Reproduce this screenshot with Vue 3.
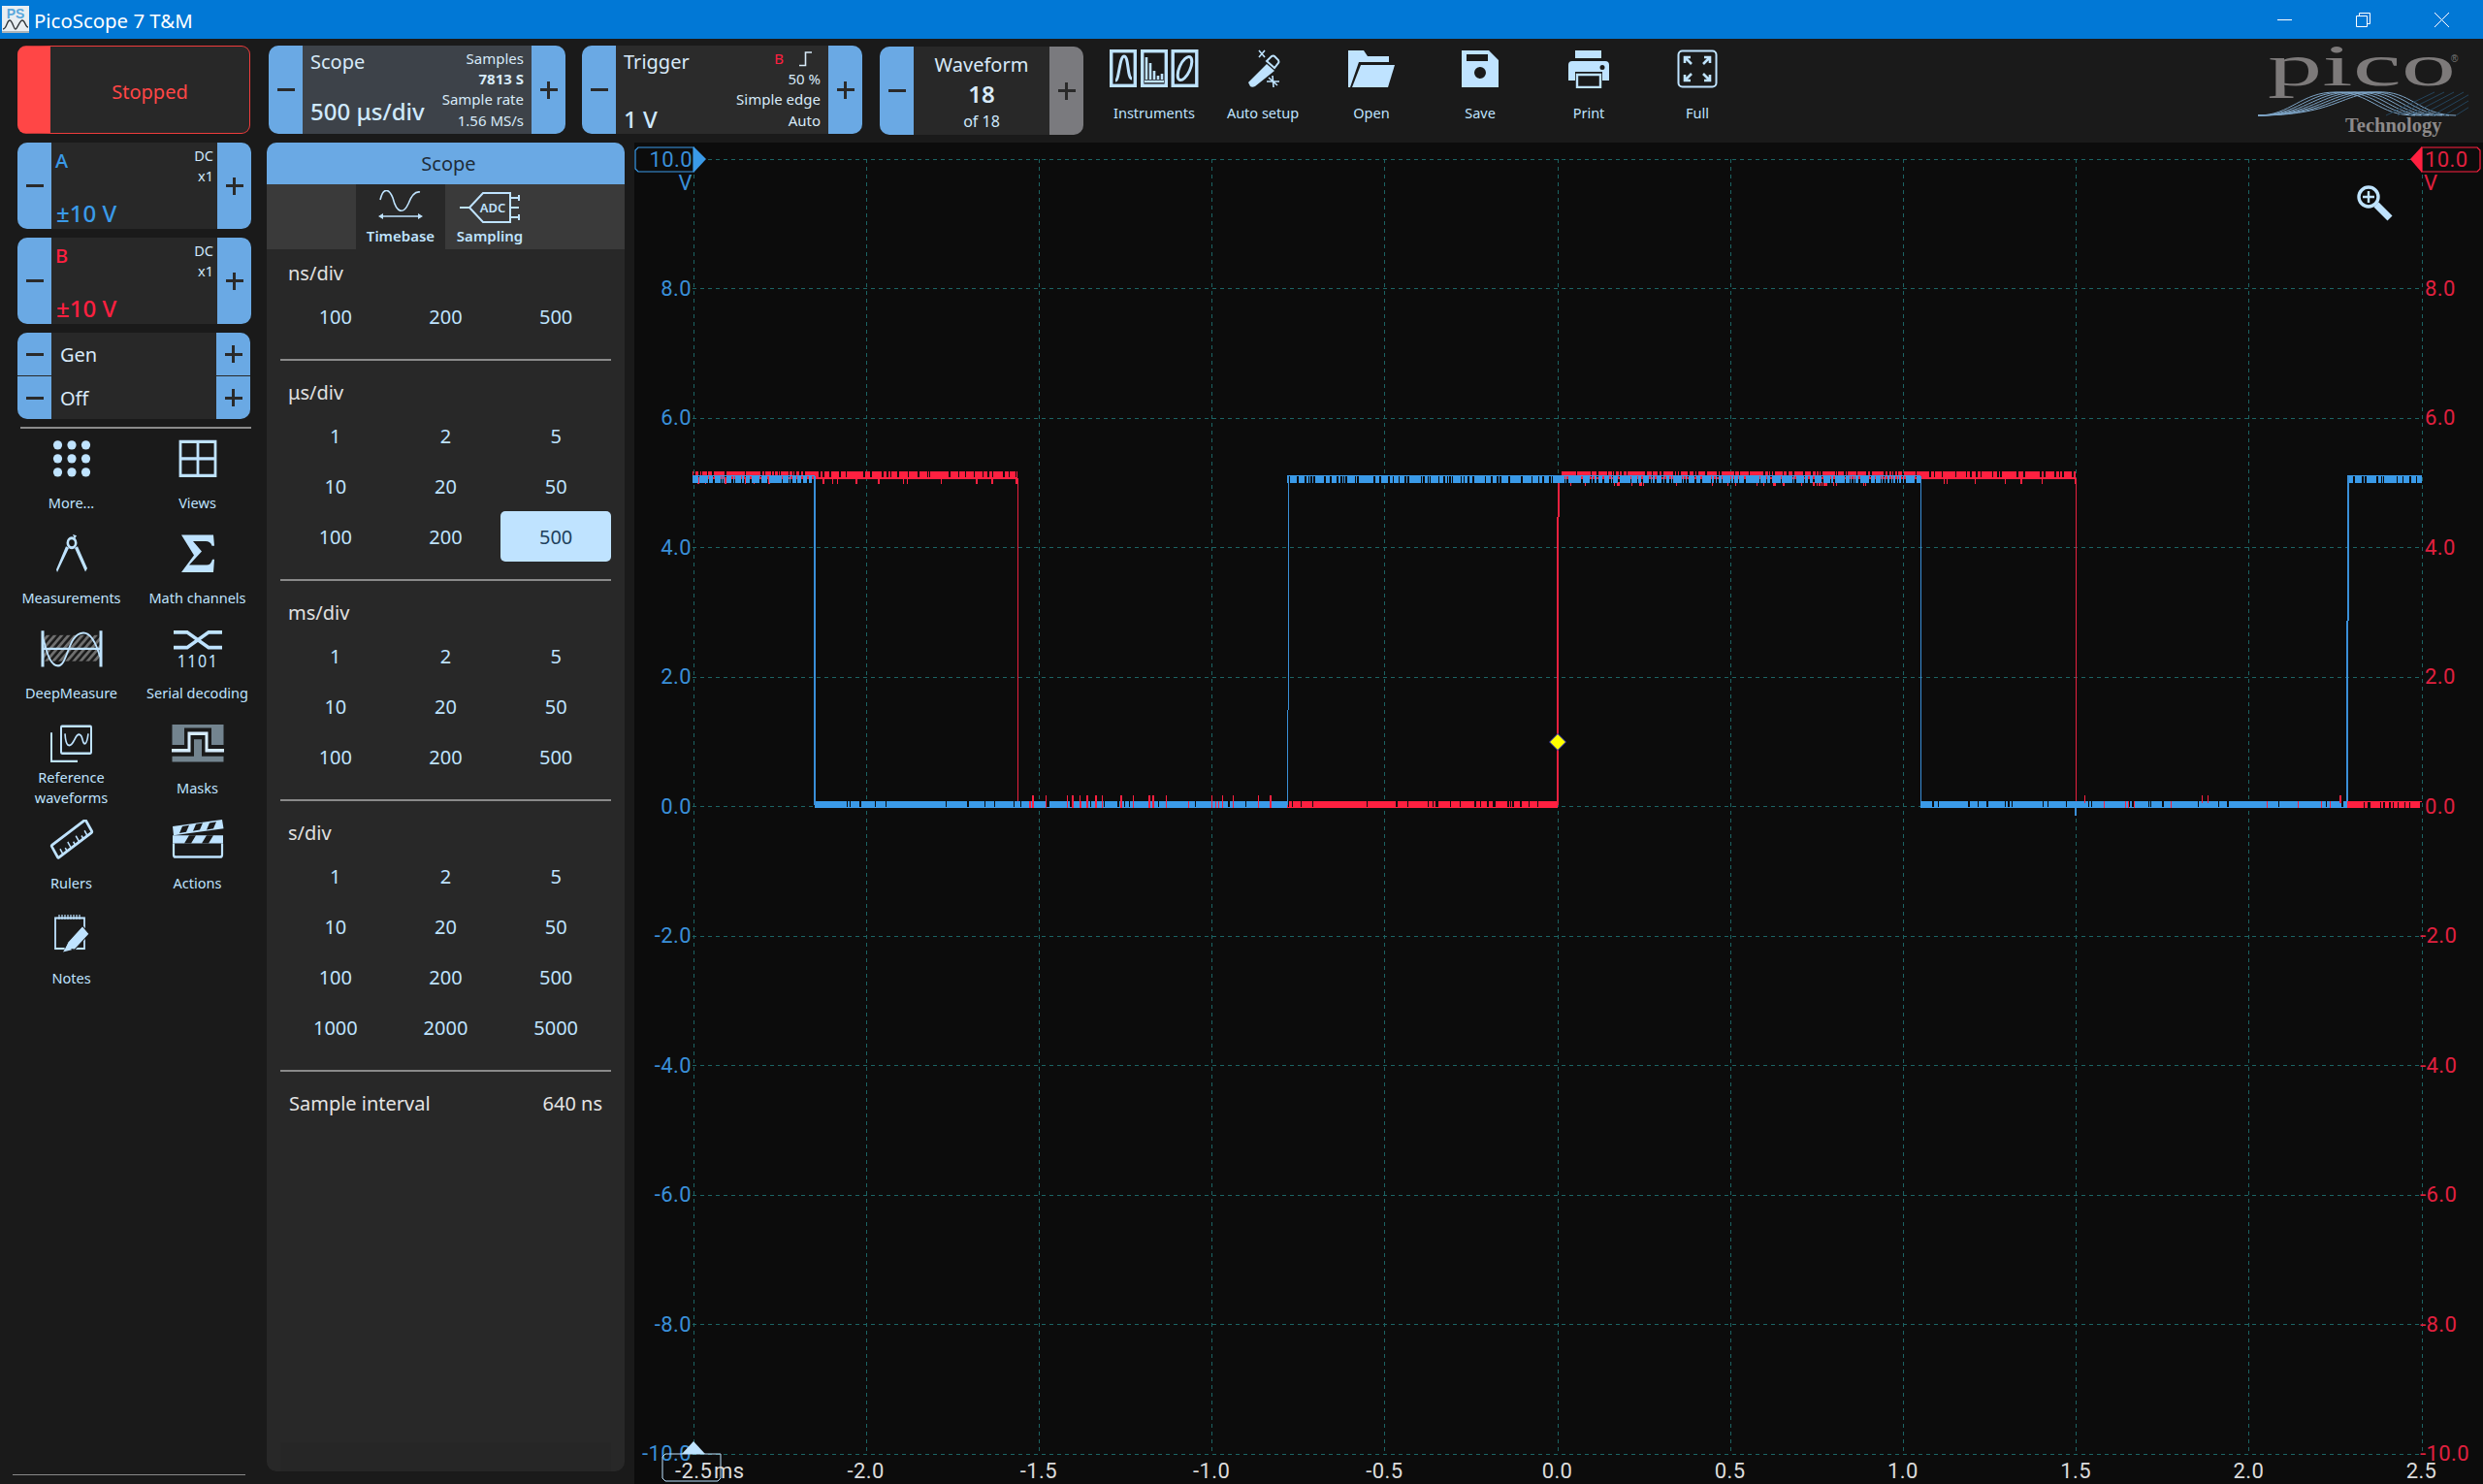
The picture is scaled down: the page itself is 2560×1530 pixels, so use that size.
<script setup>
const timeSections = [
  { label: 'ns/div', rows: [[100, 200, 500]] },
  { label: 'μs/div', rows: [[1, 2, 5], [10, 20, 50], [100, 200, 500]] },
  { label: 'ms/div', rows: [[1, 2, 5], [10, 20, 50], [100, 200, 500]] },
  { label: 's/div', rows: [[1, 2, 5], [10, 20, 50], [100, 200, 500], [1000, 2000, 5000]] }
]

const channels = [
  { name: 'A', cls: 'chan-a' },
  { name: 'B', cls: 'chan-b' }
]

// plot geometry, in page pixels
const xAt = (t) => 1605.5 + t * 356.4
const yAt = (v) => 831.3 - v * 66.73
const voltTicks = [8, 6, 4, 2, 0, -2, -4, -6, -8]
const timeTicks = [-2, -1.5, -1, -0.5, 0, 0.5, 1, 1.5, 2, 2.5]
const gridX = [-2.5, ...timeTicks].map(xAt)
const gridY = [10, ...voltTicks, -10].map(yAt)

// small seeded generator so the noise is the same on every load
let seed = 7813
const rnd = () => {
  seed = (seed + 0x6d2b79f5) | 0
  let t = Math.imul(seed ^ (seed >>> 15), 1 | seed)
  t = (t + Math.imul(t ^ (t >>> 7), 61 | t)) ^ t
  return ((t ^ (t >>> 14)) >>> 0) / 4294967296
}

const box = (x, y, w, h) => `M${x} ${y}h${w}v${h}h-${w}z`

const runs = (x0, x1, y, h, maxOn, maxOff) => {
  let d = ''
  let x = x0
  while (x < x1) {
    const on = Math.min(1 + Math.floor(rnd() * rnd() * maxOn), x1 - x)
    d += box(x, y, on, h)
    x += on + 1 + Math.floor(rnd() * maxOff)
  }
  return d
}

const spikes = (x0, x1, y, h, count) => {
  let d = ''
  for (let i = 0; i < count; i++) {
    const x = Math.floor(x0 + rnd() * (x1 - x0))
    d += box(x, y, rnd() > 0.8 ? 2 : 1, h)
  }
  return d
}

const redPath =
  runs(714, 1049, 486, 6, 20, 2) + box(714, 492, 335, 1.5) + spikes(840, 1049, 493, 6, 12) + spikes(714, 840, 493, 6, 8) +
  runs(1610, 2140, 486, 6, 20, 2) + box(1610, 492, 530, 1.5) + spikes(1610, 1980, 497, 4, 30) + spikes(1980, 2140, 493, 6, 7) +
  box(1327, 826, 279, 7) + box(2140, 830, 280, 3)

const redOver =
  spikes(1049, 1327, 820, 13, 22) + spikes(1049, 1327, 826, 7, 10) + spikes(2140, 2420, 826, 7, 9) + box(2420, 826, 77, 7) + spikes(2140, 2497, 820, 8, 5)

const bluePath =
  runs(714, 840, 490, 7.5, 18, 2) + runs(1327, 1980, 490, 7.5, 16, 2) + runs(2420, 2497, 490, 7.5, 18, 2) +
  box(714, 490, 126, 1) + box(1327, 490, 653, 1) + box(2420, 490, 77, 1) +
  box(840, 826, 487, 7) + box(1980, 826, 440, 7)

const blueGaps = spikes(840, 1327, 826, 6, 26) + spikes(1980, 2420, 826, 6, 24) + spikes(1327, 1606, 826, 6, 28)
const redGaps = spikes(2420, 2497, 827, 6, 12)

const wavePaths = Array.from({ length: 7 }, (_, i) => {
  const s = i * 7
  return `M2328 119 C${2362 + s} 119 ${2372 + s} ${95 + i * 0.4} ${2408 + s} 95 S${2452 + s} 119 ${2490 + s} 119`
})
const waveFade = Array.from({ length: 7 }, (_, i) => `M${2460 + i * 12} 119 L${2510 + i * 10} 95`)
</script>

<template>
  <div class="app">
    <header class="titlebar">
      <svg class="app-icon" viewBox="0 0 28 28">
        <rect width="28" height="28" fill="#e8eef2" />
        <text x="14" y="13" text-anchor="middle" class="ps">PS</text>
        <path d="M1 24 C5 24 5 15 8 15 S12 24 14 24 S18 15 21 15 S24 22 27 22" fill="none" stroke="#33383c" stroke-width="1.4" />
        <path d="M0 27H28" stroke="#9aa0a4" stroke-width="1.5" />
      </svg>
      <span class="app-name">PicoScope 7 T&amp;M</span>
      <div class="win-buttons">
        <svg viewBox="0 0 15 15"><path d="M0 7.5H15" /></svg>
        <svg viewBox="0 0 15 15"><path d="M0.5 3.5H11.5V14.5H0.5ZM3.5 3.5V0.5H14.5V11.5H11.5" /></svg>
        <svg viewBox="0 0 15 15"><path d="M0 0L15 15M15 0L0 15" /></svg>
      </div>
    </header>

    <section class="topbar">
      <div class="run-btn"><span>Stopped</span></div>

      <div class="stepper scope-step">
        <div class="step minus"></div>
        <div class="mid scope-mid">
          <div class="col-left">
            <span class="name">Scope</span>
            <span class="value">500 μs/div</span>
          </div>
          <div class="col-right">
            <span>Samples</span>
            <b>7813 S</b>
            <span>Sample rate</span>
            <span>1.56 MS/s</span>
          </div>
        </div>
        <div class="step plus"></div>
      </div>

      <div class="stepper trigger-step">
        <div class="step minus"></div>
        <div class="mid trigger-mid">
          <div class="col-left">
            <span class="name">Trigger</span>
            <span class="value">1 V</span>
          </div>
          <div class="col-right">
            <span class="trig-src">
              <em>B</em>
              <svg width="14" height="16" viewBox="0 0 14 16"><path d="M0 14.5H6.5V1H13" fill="none" stroke="#d8eaf8" stroke-width="1.6" /></svg>
            </span>
            <span>50 %</span>
            <span>Simple edge</span>
            <span>Auto</span>
          </div>
        </div>
        <div class="step plus"></div>
      </div>

      <div class="stepper wave-step">
        <div class="step minus"></div>
        <div class="mid wave-mid">
          <span class="name">Waveform</span>
          <b>18</b>
          <span class="of">of 18</span>
        </div>
        <div class="step plus off"></div>
      </div>

      <div class="tools">
        <div class="tool">
          <svg width="92" height="40" viewBox="0 0 92 40">
            <g fill="none" stroke="#bfe3ff" stroke-width="3.4">
              <rect x="1.7" y="1.7" width="24.6" height="35.6" />
              <rect x="33.7" y="1.7" width="24.6" height="35.6" />
              <rect x="65.2" y="1.7" width="24.6" height="35.6" />
              <path d="M6 32 C10 32 10 7 15 7 S18 30 23 30" stroke-width="3" />
              <path d="M38 31V8M42 31V14M46 31V22M50 31V27M54 31V25M36 33H56" stroke-width="2.6" />
              <ellipse cx="77.5" cy="19.5" rx="5.5" ry="13" transform="rotate(24 77.5 19.5)" stroke-width="3" />
            </g>
          </svg>
          <span>Instruments</span>
        </div>
        <div class="tool">
          <svg width="50" height="40" viewBox="0 0 50 40">
            <path d="M10 34 L29 15 L37 22 L17 38 Q14 39.5 12 38 Z" fill="#bfe3ff" />
            <path d="M29 12 L34 7 Q36 6 37 7 L41 11 Q42 13 41 14 L37 19 Z" fill="#1a1a1a" stroke="#bfe3ff" stroke-width="2" />
            <path d="M21 1 L27 8 M27 1 L21 8 M35 27 L36 39 M29 33 L42 33 M31 29 L40 37" stroke="#bfe3ff" stroke-width="1.6" fill="none" />
          </svg>
          <span>Auto setup</span>
        </div>
        <div class="tool">
          <svg width="50" height="40" viewBox="0 0 50 40">
            <path d="M1 1H17L21 7H43V13H12L3 39H1Z" fill="#bfe3ff" />
            <path d="M14 16H49L42 39H5Z" fill="#bfe3ff" />
          </svg>
          <span>Open</span>
        </div>
        <div class="tool">
          <svg width="40" height="40" viewBox="0 0 40 40">
            <path fill-rule="evenodd" d="M1 1H29L39 11V39H1ZM6 5V12H28V5ZM20 18A6 6 0 1 0 20 30A6 6 0 1 0 20 18Z" fill="#bfe3ff" />
          </svg>
          <span>Save</span>
        </div>
        <div class="tool">
          <svg width="44" height="40" viewBox="0 0 44 40">
            <rect x="8" y="1" width="27" height="8" fill="#bfe3ff" />
            <path fill-rule="evenodd" d="M5 12H39Q43 12 43 16V32H36V23H8V32H1V16Q1 12 5 12ZM36 16A2.5 2.5 0 1 0 36 21A2.5 2.5 0 1 0 36 16Z" fill="#bfe3ff" />
            <path d="M10 26H34V39H10Z" fill="none" stroke="#bfe3ff" stroke-width="2.4" />
          </svg>
          <span>Print</span>
        </div>
        <div class="tool">
          <svg width="42" height="40" viewBox="0 0 42 40">
            <rect x="1.5" y="1.5" width="39" height="37" rx="4" fill="none" stroke="#bfe3ff" stroke-width="2" />
            <path d="M8 14V8H14M9 9L15 15M34 14V8H28M33 9L27 15M8 26V32H14M9 31L15 25M34 26V32H28M33 31L27 25" fill="none" stroke="#bfe3ff" stroke-width="2.6" />
          </svg>
          <span>Full</span>
        </div>
      </div>

      <svg class="logo" viewBox="2305 40 240 107">
        <text x="2338" y="88" textLength="194" lengthAdjust="spacingAndGlyphs" class="logo-word">pico</text>
        <text x="2527" y="64" class="logo-r">®</text>
        <g fill="none" stroke-width="1">
          <path v-for="(d, i) in wavePaths" :key="i" :d="d" stroke="#7fa6c8" />
          <path v-for="(d, i) in waveFade" :key="'f' + i" :d="d" stroke="#24445c" />
        </g>
        <text x="2418" y="136" class="logo-sub">Technology</text>
      </svg>
    </section>

    <main class="body">
      <aside class="sidebar">
        <div v-for="c in channels" :key="c.name" class="stepper chan-step" :class="c.cls">
          <div class="step minus"></div>
          <div class="mid chan-mid">
            <div class="chan-top">
              <b>{{ c.name }}</b>
              <div class="chan-mode"><span>DC</span><span>x1</span></div>
            </div>
            <span class="chan-range">±10 V</span>
          </div>
          <div class="step plus"></div>
        </div>

        <div class="gen">
          <div class="gen-row">
            <div class="step minus"></div>
            <span>Gen</span>
            <div class="step plus"></div>
          </div>
          <div class="gen-row">
            <div class="step minus"></div>
            <span>Off</span>
            <div class="step plus"></div>
          </div>
        </div>

        <div class="rule"></div>

        <div class="side-tools">
          <div class="side-tool">
            <svg viewBox="-35 0 70 36" preserveAspectRatio="none">
              <g fill="#bfe3ff">
                <ellipse cx="-14.5" cy="5" rx="4.6" ry="4" /><ellipse cx="0" cy="5" rx="4.6" ry="4" /><ellipse cx="14.5" cy="5" rx="4.6" ry="4" />
                <ellipse cx="-14.5" cy="17" rx="4.6" ry="4" /><ellipse cx="0" cy="17" rx="4.6" ry="4" /><ellipse cx="14.5" cy="17" rx="4.6" ry="4" />
                <ellipse cx="-14.5" cy="29" rx="4.6" ry="4" /><ellipse cx="0" cy="29" rx="4.6" ry="4" /><ellipse cx="14.5" cy="29" rx="4.6" ry="4" />
              </g>
            </svg>
            <span>More...</span>
          </div>
          <div class="side-tool">
            <svg viewBox="-35 0 70 36" preserveAspectRatio="none">
              <path d="M-18 2V32H18V2ZM0 2V32M-18 17H18" fill="none" stroke="#bfe3ff" stroke-width="2.8" />
            </svg>
            <span>Views</span>
          </div>
          <div class="side-tool">
            <svg viewBox="-35 0 70 36" preserveAspectRatio="none">
              <circle cx="0" cy="7.5" r="4.2" fill="none" stroke="#bfe3ff" stroke-width="2.6" />
              <path d="M1 0L5 1L3 4ZM-3 12L-6 10.5L-16 31L-15 33.5ZM3 12L6 10.5L16 30L14 33Z" fill="#bfe3ff" />
            </svg>
            <span>Measurements</span>
          </div>
          <div class="side-tool">
            <svg viewBox="-35 0 70 36" preserveAspectRatio="none">
              <path d="M-17 0.5H16L17 10H14.5Q13 6 8 6H-5L4 15L-9 27H9Q13.5 27 15 22H17L16 33.5H-17L-4 18.5Z" fill="#bfe3ff" />
            </svg>
            <span>Math channels</span>
          </div>
          <div class="side-tool">
            <svg viewBox="-35 0 70 36" preserveAspectRatio="none">
              <defs>
                <pattern id="hatch" width="5" height="5" patternUnits="userSpaceOnUse" patternTransform="rotate(45)">
                  <rect width="2.6" height="5" fill="#6f6f6f" />
                </pattern>
              </defs>
              <rect x="-29" y="5" width="58" height="23" fill="url(#hatch)" />
              <path d="M-30 1V33M30 1V33" stroke="#bfe3ff" stroke-width="3" />
              <path d="M-29 17H29" stroke="#bfe3ff" stroke-width="1.8" />
              <path d="M-29 9 C-25 24 -21 32 -14 32 C-4 32 -4 3 12 3 C20 3 25 12 29 24" fill="none" stroke="#bfe3ff" stroke-width="1.8" />
            </svg>
            <span>DeepMeasure</span>
          </div>
          <div class="side-tool">
            <svg viewBox="-35 0 70 36" preserveAspectRatio="none">
              <path d="M-25 2.5H-11L11 16H25M-25 16H-11L11 2.5H25" fill="none" stroke="#bfe3ff" stroke-width="3.2" />
              <text x="0" y="33.5" text-anchor="middle" class="bits">1101</text>
            </svg>
            <span>Serial decoding</span>
          </div>
          <div class="side-tool">
            <svg viewBox="-35 0 70 36" preserveAspectRatio="none">
              <rect x="-11" y="1.5" width="31" height="24" rx="1" fill="none" stroke="#bfe3ff" stroke-width="2" />
              <path d="M-21 7V32.5H6" fill="none" stroke="#bfe3ff" stroke-width="2" />
              <path d="M-7 8 C-6 22 -1 20 3 13 S10 9 11 13 S15 21 17 8" fill="none" stroke="#bfe3ff" stroke-width="1.6" />
            </svg>
            <span>Reference waveforms</span>
          </div>
          <div class="side-tool">
            <svg viewBox="-35 0 70 36" preserveAspectRatio="none">
              <rect x="-26.5" y="0" width="53" height="33" fill="#73848f" />
              <path d="M-27 23H-9V8H9V23H27" fill="none" stroke="#1a1a1a" stroke-width="10" />
              <path d="M-27 23H-9V8H9V23H27" fill="none" stroke="#d6ecfc" stroke-width="3" />
            </svg>
            <span>Masks</span>
          </div>
          <div class="side-tool">
            <svg viewBox="-35 0 70 36" preserveAspectRatio="none">
              <g transform="translate(0 17) rotate(-33)">
                <rect x="-21" y="-6.5" width="42" height="13" rx="1" fill="none" stroke="#bfe3ff" stroke-width="2.6" />
                <path d="M-15 6V1M-10 6V3M-5 6V0M0 6V3M5 6V0M10 6V3M15 6V1" stroke="#bfe3ff" stroke-width="1.5" />
              </g>
            </svg>
            <span>Rulers</span>
          </div>
          <div class="side-tool">
            <svg viewBox="-35 0 70 36" preserveAspectRatio="none">
              <path d="M-26 6L25 0L26.5 8L-25 14Z" fill="#bfe3ff" />
              <path d="M-26 14H26V21H-26Z" fill="#bfe3ff" />
              <path d="M-16 6L-9 5L-12 11L-19 12ZM-2 4L5 3L2 9L-5 10ZM12 3L19 2L16 8L9 9ZM-14 21L-9 14H-2L-7 21ZM4 21L9 14H16L11 21Z" fill="#1a1a1a" />
              <path d="M-25 21V31Q-25 33 -23 33H23Q25 33 25 31V21" fill="none" stroke="#bfe3ff" stroke-width="2.2" />
            </svg>
            <span>Actions</span>
          </div>
          <div class="side-tool">
            <svg viewBox="-35 0 70 36" preserveAspectRatio="none">
              <rect x="-17" y="3" width="30" height="27" fill="none" stroke="#bfe3ff" stroke-width="1.8" />
              <path d="M-13 0V4M-10 0V4M-7 0V4M-4 0V4M-1 0V4M2 0V4M5 0V4M8 0V4" stroke="#bfe3ff" stroke-width="1.2" />
              <path d="M-7 30 L-4 24 L11 10 L18 17 L3 31 Z" fill="#bfe3ff" stroke="#1a1a1a" stroke-width="1" />
              <path d="M-9 33L-4 26L0 31Z" fill="#bfe3ff" />
            </svg>
            <span>Notes</span>
          </div>
        </div>

        <div class="rule bottom-rule"></div>
      </aside>

      <section class="panel">
        <div class="panel-head">Scope</div>
        <div class="tabs">
          <div class="tab active">
            <svg width="46" height="36" viewBox="0 0 46 36">
              <path d="M2 10 C5 -3 11 -2 15 8 C19 24 26 25 31 14 C34 6 38 1 43 2" fill="none" stroke="#bfe3ff" stroke-width="1.6" />
              <path d="M3 27H43" stroke="#bfe3ff" stroke-width="1.6" />
              <path d="M0 27L5 24V30ZM46 27L41 24V30Z" fill="#bfe3ff" />
            </svg>
            <span>Timebase</span>
          </div>
          <div class="tab">
            <svg width="66" height="36" viewBox="0 0 66 36">
              <path d="M2 18H12M12 18L26 3H54V33H26ZM54 8H63M54 18H63M54 28H63M63 5V11M63 25V31" fill="none" stroke="#bfe3ff" stroke-width="2" />
              <text x="36" y="23" text-anchor="middle" class="adc">ADC</text>
            </svg>
            <span>Sampling</span>
          </div>
        </div>

        <div v-for="section in timeSections" :key="section.label" class="time-section">
          <div class="time-label">{{ section.label }}</div>
          <div class="time-grid">
            <template v-for="row in section.rows">
              <div
                v-for="val in row"
                :key="val"
                class="time-cell"
                :class="{ selected: section.label === 'μs/div' && val === 500 }"
              >{{ val }}</div>
            </template>
          </div>
          <div class="time-rule"></div>
        </div>

        <div class="interval"><span>Sample interval</span><span>640 ns</span></div>
        <div class="panel-foot"></div>
      </section>

      <div class="plot">
        <svg class="plot-svg" width="1906" height="1383" viewBox="654 147 1906 1383" font-family="Roboto, sans-serif">
          <g class="grid" shape-rendering="crispEdges">
            <path v-for="x in gridX" :key="x" :d="`M${Math.round(x)} 164V1499`" />
            <path v-for="y in gridY" :key="y" :d="`M714 ${Math.round(y)}H2497`" />
          </g>

          <g shape-rendering="crispEdges">
            <path :d="redPath" fill="#ff2040" />
            <path d="M1049.5 493V830M2140.5 493V833M1606 830V533M1607 533V493" stroke="#e8213f" stroke-width="1.4" fill="none" />
            <path :d="bluePath" fill="#3a9ae8" />
            <path d="M840 491V830M1327.5 830V732M1328.5 732V491M1980.5 491V826M2420 826V640M2421 640V491M2140 833V841" stroke="#3a8fd8" stroke-width="1.4" fill="none" />
            <path :d="blueGaps" fill="#0c0c0c" />
            <path :d="redOver" fill="#ff2040" />
            <path :d="redGaps" fill="#0c0c0c" />
          </g>

          <path d="M1606 756.5L1614.5 765L1606 773.5L1597.5 765Z" fill="#ffff00" stroke="#2020c0" stroke-width="1" />

          <g class="volt-left">
            <text v-for="v in voltTicks" :key="v" x="713" :y="yAt(v)">{{ v.toFixed(1) }}</text>
            <text x="713" :y="yAt(-10)">-10.0</text>
          </g>
          <g class="volt-right">
            <text v-for="v in voltTicks" :key="v" :x="v < 0 ? 2495 : 2500" :y="yAt(v)">{{ v.toFixed(1) }}</text>
            <text x="2495" :y="yAt(-10)">-10.0</text>
          </g>

          <path d="M658 152H715V177H658L655 174V155Z" fill="#0c0c0c" stroke="#3a9ae8" stroke-width="1.2" />
          <text x="714" y="164" class="tag blue">10.0</text>
          <path d="M715 151L728 164L715 178Z" fill="#3a9ae8" />
          <text x="714" y="188" class="tag-unit blue">V</text>

          <path d="M2554 152H2497V177H2554L2557 174V155Z" fill="#0c0c0c" stroke="#ff2040" stroke-width="1.2" />
          <text x="2500" y="164" class="tag red">10.0</text>
          <path d="M2497 151L2485 164L2497 178Z" fill="#ff2040" />
          <text x="2499" y="188" class="tag-unit red">V</text>

          <g class="time-labels">
            <text v-for="t in timeTicks" :key="t" :x="xAt(t)" y="1516">{{ t.toFixed(1) }}</text>
          </g>
          <path d="M715 1486L703 1499H727Z" fill="#bfe3ff" />
          <path d="M686 1499H743V1524L740 1527H686L683 1524V1502Z" fill="none" stroke="#bfe3ff" stroke-width="1" />
          <text x="696" y="1516" class="t-first">-2.5</text>
          <text x="736" y="1516" class="t-first">ms</text>

          <g fill="none" stroke="#bfe3ff">
            <circle cx="2442" cy="203" r="10" stroke-width="3.4" />
            <path d="M2450 211L2464 225" stroke-width="7" />
            <path d="M2442 197V209M2436 203H2448" stroke-width="2.4" />
          </g>
        </svg>
      </div>
    </main>
  </div>
</template>

<style>
html, body {
  margin: 0;
  background: #1a1a1a;
}
</style>

<style scoped>
.app {
  width: 2560px;
  height: 1530px;
  display: flex;
  flex-direction: column;
  overflow: hidden;
  background: #1a1a1a;
  font-family: "Noto Sans", "Open Sans", sans-serif;
  font-size: 15px;
  color: #d8eaf8;
}

.titlebar {
  height: 40px;
  flex: none;
  display: flex;
  align-items: center;
  background: #0178d6;
  color: #fff;
}
.app-icon {
  width: 28px;
  height: 28px;
  margin-left: 2px;
}
.ps {
  font: 700 14px "Liberation Sans", sans-serif;
  fill: #5aa7dc;
}
.app-name {
  margin-left: 5px;
  margin-top: 2px;
  font-size: 20.4px;
}
.win-buttons {
  margin-left: auto;
  display: flex;
  gap: 66px;
  margin-right: 35px;
}
.win-buttons svg {
  width: 15px;
  height: 15px;
  fill: none;
  stroke: #fff;
  stroke-width: 1;
}

.topbar {
  height: 107px;
  flex: none;
  display: flex;
  padding-top: 7px;
  box-sizing: border-box;
}
.run-btn {
  width: 240px;
  height: 91px;
  margin-left: 18px;
  box-sizing: border-box;
  border: 1.5px solid #ee3c3c;
  border-left: 34px solid #ff4646;
  border-radius: 9px;
  background: #282828;
  color: #ff4646;
  font-size: 20px;
  display: flex;
  align-items: center;
  justify-content: center;
}
.run-btn span {
  margin-top: 4px;
}

.stepper {
  display: flex;
  border-radius: 10px;
  overflow: hidden;
  background: #282828;
}
.step {
  position: relative;
  width: 35px;
  flex: none;
  background: #6aa9e4;
}
.step::before,
.step.plus::after {
  content: "";
  position: absolute;
  left: 50%;
  top: 50%;
  background: #2a2a2a;
}
.step::before {
  width: 18px;
  height: 3px;
  margin: -1.5px 0 0 -9px;
}
.step.plus::after {
  width: 3px;
  height: 18px;
  margin: -9px 0 0 -1.5px;
}
.step.off {
  background: #7a7a7e;
}
.mid {
  flex: 1;
  min-width: 0;
}

.scope-step {
  width: 306px;
  height: 91px;
  margin-left: 19px;
}
.trigger-step {
  width: 289px;
  height: 91px;
  margin-left: 17px;
}
.wave-step {
  width: 210px;
  height: 91px;
  margin-left: 18px;
  margin-top: 1px;
}
.scope-mid {
  background: #3d4249;
}
.scope-mid,
.trigger-mid {
  display: flex;
  justify-content: space-between;
  padding: 3px 8px 6px 8px;
  box-sizing: border-box;
}
.trigger-mid {
  background: #2b2b2b;
  padding-bottom: 0;
}
.trigger-mid .value {
  margin-bottom: -2px;
}
.col-left {
  display: flex;
  flex-direction: column;
  justify-content: space-between;
}
.col-left .name {
  font-size: 20px;
  line-height: 28px;
}
.col-left .value {
  font-size: 24px;
  font-weight: 500;
  line-height: 34px;
  color: #cfe9fd;
}
.col-right {
  display: flex;
  flex-direction: column;
  align-items: flex-end;
  font-size: 15px;
  line-height: 21.2px;
}
.trig-src {
  display: flex;
  align-items: center;
  gap: 16px;
  padding-right: 8px;
  height: 21.2px;
}
.trig-src em {
  font-style: normal;
  color: #ff2040;
}
.wave-mid {
  display: flex;
  flex-direction: column;
  align-items: center;
  padding-top: 5px;
  box-sizing: border-box;
}
.wave-mid .name {
  font-size: 20px;
  line-height: 28px;
}
.wave-mid b {
  font-size: 24px;
  line-height: 31px;
  font-weight: 600;
}
.wave-mid .of {
  font-size: 16px;
  line-height: 26px;
  color: #cfe9fd;
}

.tools {
  display: flex;
  margin-left: 17px;
}
.tool {
  width: 112px;
  display: flex;
  flex-direction: column;
  align-items: center;
  padding-top: 4px;
  color: #bfe3ff;
}
.tool svg {
  height: 40px;
  flex: none;
}
.tool span {
  margin-top: 15px;
  font-size: 14.5px;
  line-height: 20px;
}

.logo {
  margin-left: auto;
  margin-right: 15px;
  margin-top: -7px;
  width: 240px;
  height: 107px;
}
.logo-word {
  font: 400 62px "Liberation Serif", serif;
  fill: #7d7a7a;
}
.logo-r {
  font: 400 10px "Liberation Sans", sans-serif;
  fill: #7d7a7a;
}
.logo-sub {
  font: 700 20.5px "Liberation Serif", serif;
  fill: #8d8a8a;
}

.body {
  flex: 1;
  display: flex;
  min-height: 0;
}

.sidebar {
  width: 275px;
  flex: none;
  padding-left: 18px;
  box-sizing: border-box;
  display: flex;
  flex-direction: column;
}
.chan-step {
  width: 241px;
  height: 89px;
  margin-bottom: 9px;
}
.chan-mid {
  display: flex;
  flex-direction: column;
  justify-content: space-between;
  padding: 3px 4px 0 4px;
  box-sizing: border-box;
}
.chan-top {
  display: flex;
  justify-content: space-between;
}
.chan-top b {
  font-size: 20px;
  font-weight: 500;
  line-height: 32px;
}
.chan-mode {
  display: flex;
  flex-direction: column;
  align-items: flex-end;
  line-height: 21px;
  font-size: 14.5px;
  color: #cfe9fd;
}
.chan-range {
  font-size: 24px;
  font-weight: 500;
  line-height: 34px;
  padding-left: 1px;
  margin-bottom: -1px;
}
.chan-a b,
.chan-a .chan-range {
  color: #3a9ae8;
}
.chan-b b,
.chan-b .chan-range {
  color: #ff2040;
}

.gen {
  width: 240px;
  border-radius: 10px;
  overflow: hidden;
  background: #282828;
}
.gen-row {
  height: 44px;
  display: flex;
  align-items: center;
  font-size: 20px;
}
.gen-row + .gen-row {
  margin-top: 1px;
}
.gen-row .step {
  height: 100%;
}
.gen-row span {
  flex: 1;
  padding-left: 9px;
  margin-top: 1px;
}
.rule {
  width: 238px;
  height: 2px;
  margin: 8px 0 0 3px;
  background: #8a8a8a;
  flex: none;
}
.side-tools {
  display: grid;
  grid-template-columns: 130px 130px;
  grid-auto-rows: 98px;
  margin: 11px 0 0 -9.5px;
}
.side-tool {
  display: flex;
  flex-direction: column;
  align-items: center;
  color: #bfe3ff;
  text-align: center;
}
.side-tool svg {
  width: 70px;
  height: 42px;
  flex: none;
}
.side-tool span {
  height: 46px;
  display: flex;
  align-items: center;
  justify-content: center;
  font-size: 14.5px;
  line-height: 21px;
  width: 130px;
}
.bottom-rule {
  margin: auto 0 9px -5px;
  width: 240px;
  height: 1px;
}

.panel {
  width: 369px;
  flex: none;
  height: 1370px;
  background: #282828;
  border-radius: 10px;
  overflow: hidden;
  display: flex;
  flex-direction: column;
}
.panel-head {
  height: 43px;
  flex: none;
  padding-left: 6px;
  box-sizing: border-box;
  background: #6aa9e4;
  color: #1e2c3a;
  font-size: 20px;
  line-height: 44px;
  text-align: center;
}
.tabs {
  height: 67px;
  flex: none;
  display: flex;
  padding-left: 92px;
  background: #3a3a3a;
}
.tab {
  width: 92px;
  display: flex;
  flex-direction: column;
  align-items: center;
  padding-top: 6px;
  box-sizing: border-box;
  font-size: 15px;
  font-weight: 600;
  color: #bfe3ff;
}
.tab svg {
  flex: none;
}
.tab span {
  line-height: 22px;
}
.tab.active {
  background: #282828;
}
.adc {
  font: 600 13px "Noto Sans", sans-serif;
  fill: #bfe3ff;
}
.bits {
  font: 400 16px "Noto Sans", sans-serif;
  letter-spacing: 1.5px;
  fill: #bfe3ff;
}

.time-section {
  padding-top: 14px;
  flex: none;
}
.tabs + .time-section {
  padding-top: 6px;
}
.time-label {
  height: 34px;
  box-sizing: border-box;
  padding: 2px 0 0 22px;
  line-height: 34px;
  margin-bottom: 3px;
  font-size: 20px;
  color: #e0e0e0;
}
.time-grid {
  display: grid;
  grid-template-columns: repeat(3, 1fr);
  grid-auto-rows: 52px;
  margin: 0 14px;
}
.time-cell {
  display: flex;
  align-items: center;
  justify-content: center;
  font-size: 20px;
  color: #bfe3ff;
}
.time-cell.selected {
  background: #bfe3ff;
  color: #20405c;
  border-radius: 5px;
}
.time-rule {
  height: 2px;
  margin: 18px 14px 0;
  background: #8a8a8a;
}
.interval {
  height: 64px;
  flex: none;
  display: flex;
  align-items: center;
  justify-content: space-between;
  padding: 0 23px;
  font-size: 20px;
  color: #e4e4e4;
}
.panel-foot {
  height: 30px;
  margin: auto 14px 0;
  background: #262626;
  flex: none;
}

.plot {
  flex: 1;
  margin-left: 10px;
  background: #0c0c0c;
  position: relative;
  min-width: 0;
}
.plot-svg {
  display: block;
}
.grid path {
  fill: none;
  stroke: #1c6464;
  stroke-width: 1;
  stroke-dasharray: 4 4;
}
.volt-left text,
.volt-right text,
.tag,
.tag-unit,
.time-labels text,
.t-first {
  font-size: 22px;
  letter-spacing: 0.4px;
}
.volt-left text {
  fill: #3a8fd8;
  text-anchor: end;
  dominant-baseline: central;
}
.volt-right text {
  fill: #e0203f;
  dominant-baseline: central;
}
.tag,
.tag-unit {
  dominant-baseline: central;
}
.tag.blue,
.tag-unit.blue {
  text-anchor: end;
}
.blue {
  fill: #3a8fd8;
}
.red {
  fill: #e0203f;
}
.time-labels text {
  fill: #dcdcdc;
  text-anchor: middle;
  dominant-baseline: central;
}
.t-first {
  fill: #dcdcdc;
  dominant-baseline: central;
}
</style>
